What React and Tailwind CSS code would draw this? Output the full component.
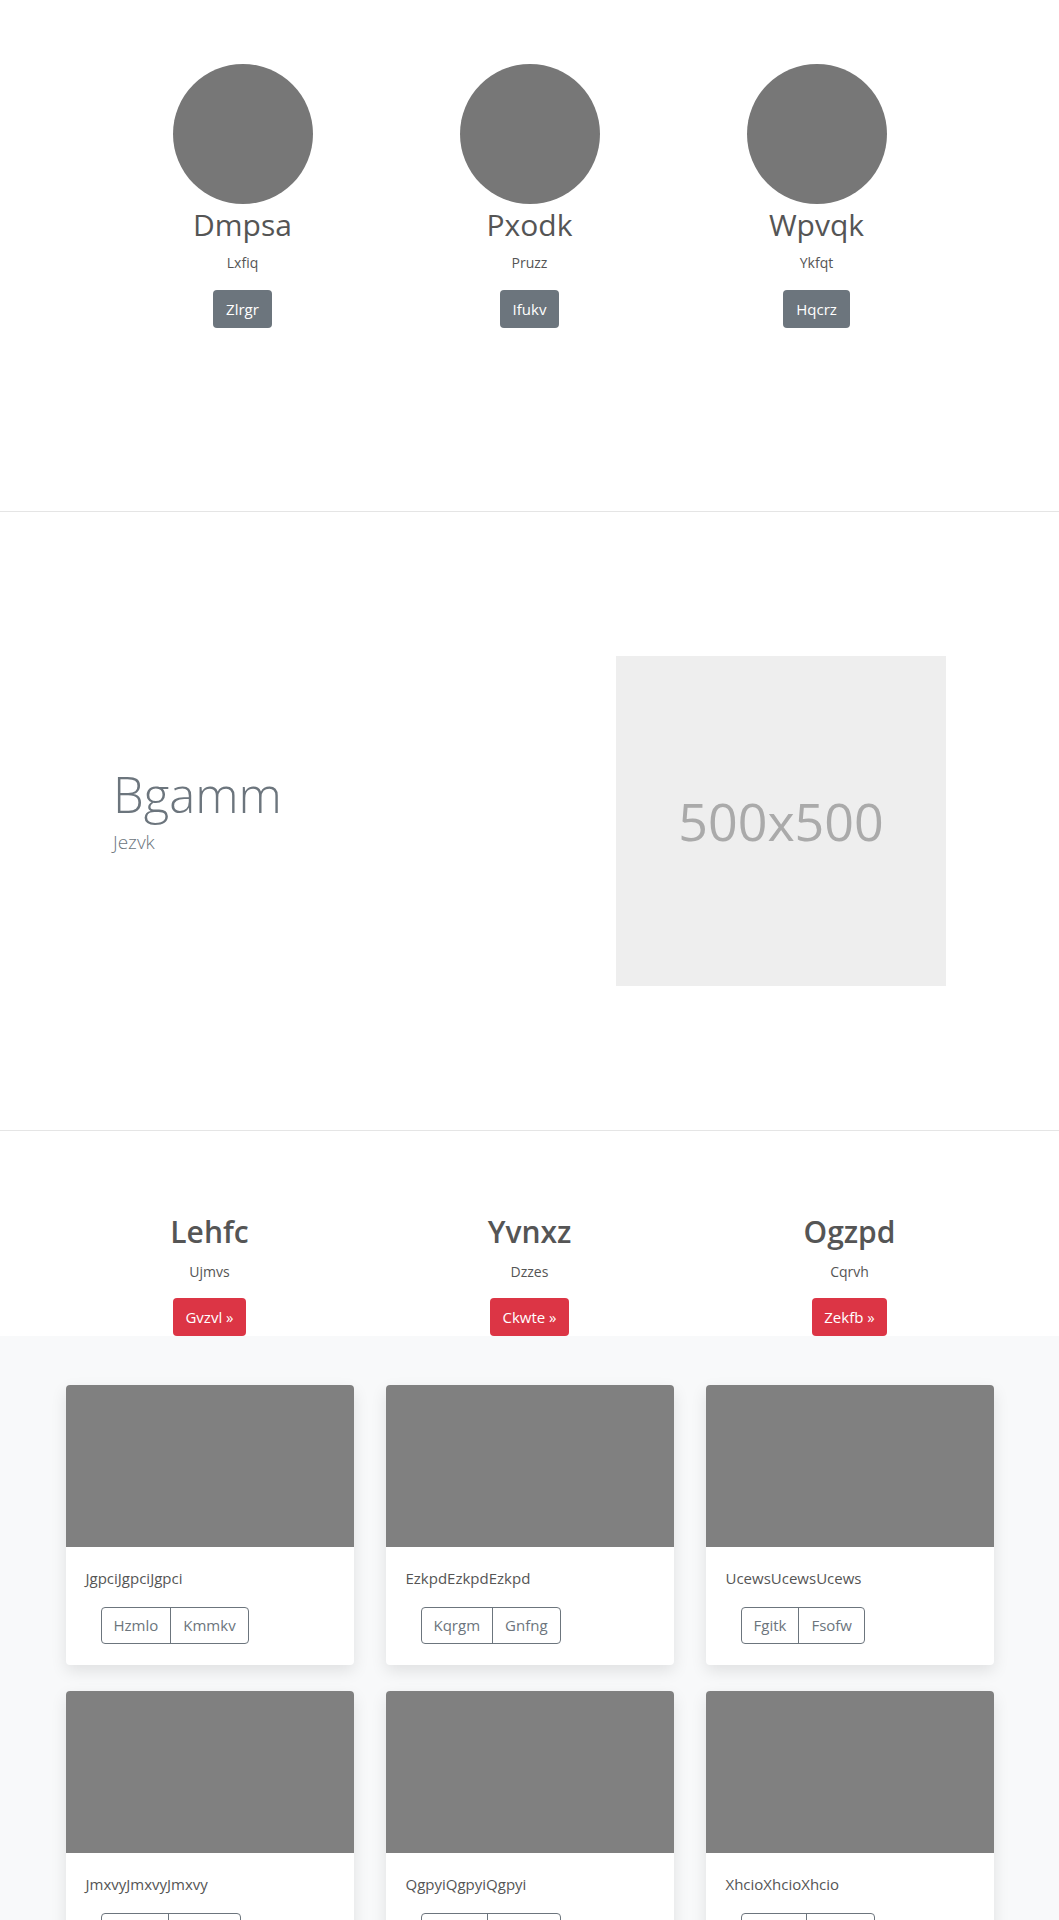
const team = [
  { name: "Dmpsa", role: "Lxfiq", action: "Zlrgr" },
  { name: "Pxodk", role: "Pruzz", action: "Ifukv" },
  { name: "Wpvqk", role: "Ykfqt", action: "Hqcrz" },
];

const features = [
  { title: "Lehfc", text: "Ujmvs", action: "Gvzvl" },
  { title: "Yvnxz", text: "Dzzes", action: "Ckwte" },
  { title: "Ogzpd", text: "Cqrvh", action: "Zekfb" },
];

const cards = [
  { text: "JgpciJgpciJgpci", a: "Hzmlo", b: "Kmmkv" },
  { text: "EzkpdEzkpdEzkpd", a: "Kqrgm", b: "Gnfng" },
  { text: "UcewsUcewsUcews", a: "Fgitk", b: "Fsofw" },
  { text: "JmxvyJmxvyJmxvy", a: "Pwlbn", b: "Tqsdhl" },
  { text: "QgpyiQgpyiQgpyi", a: "Rnkcx", b: "Mdfwu" },
  { text: "XhcioXhcioXhcio", a: "Bvqet", b: "Oyjrm" },
];

function Card({ text, a, b }) {
  return (
    <div className="bg-white rounded-[4px] overflow-hidden shadow-[0_6px_16px_rgba(0,0,0,0.1)]">
      <div className="h-[162px] bg-[#808080]" />
      <div className="pt-[20px] pb-[21px] px-[20px]">
        <p className="text-[15px] leading-[22px] text-[#555]">{text}</p>
        <div className="mt-[18px] ml-[15px] inline-flex h-[37px] border border-[#6c757d] rounded-[4px] text-[15px] text-[#6c757d]">
          <span className="px-[12px] flex items-center border-r border-[#6c757d]">{a}</span>
          <span className="px-[12px] flex items-center">{b}</span>
        </div>
      </div>
    </div>
  );
}

export default function App() {
  return (
    <div className="bg-white font-['Open_Sans',sans-serif]">
      <section className="h-[512px] border-b border-[#e5e5e5]">
        <div className="flex justify-center pt-[64px]">
          {team.map((t) => (
            <div key={t.name} className="w-[287px] flex flex-col items-center">
              <div className="w-[140px] h-[140px] rounded-full bg-[#777777]" />
              <h3 className="mt-[3px] text-[30px] leading-[36px] text-[#555]">{t.name}</h3>
              <p className="mt-[10px] text-[14px] leading-[20px] text-[#555]">{t.role}</p>
              <button className="mt-[17px] h-[38px] px-[13px] rounded-[4px] bg-[#6c757d] text-white text-[15px]">
                {t.action}
              </button>
            </div>
          ))}
        </div>
      </section>

      <section className="h-[619px] border-b border-[#e5e5e5] flex items-center">
        <div className="flex-1 pl-[113px] pb-[23px]">
          <h1 className="text-[49px] leading-[56px] font-light text-[#6c757d]">Bgamm</h1>
          <p className="mt-[8px] text-[19px] leading-[24px] font-light text-[#6c757d]">Jezvk</p>
        </div>
        <div className="w-[330px] h-[330px] mr-[113px] bg-[#eeeeee] flex items-center justify-center text-[52px] text-[#aaaaaa]">
          500x500
        </div>
      </section>

      <section className="pt-[83px]">
        <div className="flex justify-center">
          {features.map((f) => (
            <div key={f.title} className="w-[320px] flex flex-col items-center">
              <h2 className="text-[30px] leading-[36px] font-semibold text-[#555]">{f.title}</h2>
              <p className="mt-[12px] text-[14px] leading-[20px] text-[#555]">{f.text}</p>
              <button className="mt-[16px] h-[38px] px-[12px] rounded-[4px] bg-[#dc3545] text-white text-[15px]">
                {f.action} »
              </button>
            </div>
          ))}
        </div>
      </section>

      <section className="bg-[#f8f9fa] pt-[49px] pb-[48px]">
        <div className="w-[960px] mx-auto grid grid-cols-3 gap-y-[26px]">
          {cards.map((c) => (
            <div key={c.text} className="px-[16px]">
              <Card {...c} />
            </div>
          ))}
        </div>
      </section>
    </div>
  );
}
